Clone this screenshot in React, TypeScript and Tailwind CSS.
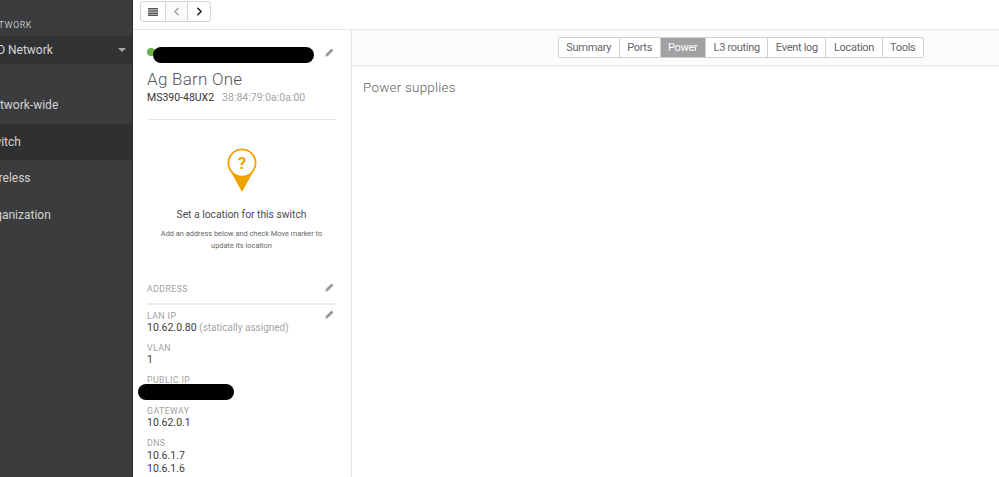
import { ChevronLeft, ChevronRight } from "lucide-react";

const tabs = ["Summary", "Ports", "Power", "L3 routing", "Event log", "Location", "Tools"];

function Pencil({ className = "" }: { className?: string }) {
  return (
    <svg viewBox="0 0 10 10" className={`h-[9px] w-[9px] text-[#9a9a9a] ${className}`} fill="currentColor">
      <path d="M7.2 0.6 L9.4 2.8 L3.2 9 L0.4 9.6 L1 6.8 Z" />
    </svg>
  );
}

function Field({ label, children }: { label: string; children: React.ReactNode }) {
  return (
    <div className="h-[31.8px] text-[10.5px] leading-[12px]">
      <div className="text-[8.8px] tracking-[0.4px] text-[#a2a2a2]">{label}</div>
      <div className="text-[#3b3b3b]">{children}</div>
    </div>
  );
}

function NavItem({ label, offset, active }: { label: string; offset: string; active?: boolean }) {
  return (
    <div className={`flex h-[36.5px] items-center overflow-hidden text-[12px] text-[#d2d2d2] ${active ? "bg-[#2f3031]" : ""}`}>
      <span className={offset}>{label}</span>
    </div>
  );
}

export default function App() {
  return (
    <div className="flex h-[477px] w-[999px] overflow-hidden bg-white font-['Roboto',sans-serif]">
      {/* Sidebar */}
      <aside className="w-[133px] shrink-0 overflow-hidden border-r border-[#2e2f30] bg-[#3b3c3e]">
        <div className="mt-[19px] ml-[-14px] h-[17px] text-[9px] leading-[12px] tracking-[0.5px] text-[#bdbdbd]">NETWORK</div>
        <div className="flex h-[28px] items-center justify-between bg-[#313233] pr-[6px] text-[12px] text-[#d6d6d6]">
          <span className="ml-[-10px]">SD Network</span>
          <span className="h-0 w-0 border-x-[4px] border-t-[4px] border-x-transparent border-t-[#a8a8a8]" />
        </div>
        <div className="mt-[23px]">
          <NavItem label="Network-wide" offset="ml-[-15px]" />
          <NavItem label="Switch" offset="ml-[-15px]" active />
          <NavItem label="Wireless" offset="ml-[-15px]" />
          <NavItem label="Organization" offset="ml-[-17px]" />
        </div>
      </aside>

      <div className="flex min-w-0 flex-1 flex-col">
        {/* Top toolbar */}
        <div className="flex h-[30px] shrink-0 items-start border-b border-[#e8e8e8] pl-[7px] pt-[1px]">
          <div className="flex h-[21px] rounded-[3px] border border-[#d4d4d4]">
            <div className="flex w-[25px] items-center justify-center border-r border-[#d4d4d4]">
              <svg viewBox="0 0 10 8" className="h-[8px] w-[10px] text-[#555]" fill="currentColor">
                <path d="M0 0h10v1.5H0zM0 2.2h10v1.5H0zM0 4.4h10v1.5H0zM0 6.5h10V8H0z" />
              </svg>
            </div>
            <div className="flex w-[22px] items-center justify-center border-r border-[#d4d4d4] bg-[#fafafa]">
              <ChevronLeft className="h-[13px] w-[13px] text-[#a5a5a5]" strokeWidth={3} />
            </div>
            <div className="flex w-[22px] items-center justify-center">
              <ChevronRight className="h-[13px] w-[13px] text-[#222]" strokeWidth={3} />
            </div>
          </div>
        </div>

        <div className="flex min-h-0 flex-1">
          {/* Device panel */}
          <section className="relative w-[219px] shrink-0 border-r border-[#e4e4e4] pl-[14px] pr-[15px]">
            <div className="flex h-[19px] items-center justify-between pt-[22px]">
              <span className="ml-0 h-[8px] w-[8px] rounded-full bg-[#67b346]" />
              <Pencil className="mr-[2px]" />
            </div>
            <span className="absolute left-[20px] top-[17px] h-[16px] w-[161px] rounded-full bg-black" />
            <h1 className="mt-[17px] text-[17px] leading-[20px] font-light tracking-[0.25px] text-[#55565a]">Ag Barn One</h1>
            <div className="mt-[2px] flex gap-[8px] text-[10.5px] leading-[13px]">
              <span className="text-[#333]">MS390-48UX2</span>
              <span className="text-[#a5a5a5]">38:84:79:0a:0a:00</span>
            </div>
            <div className="mt-[15px] border-t border-[#e8e8e8]" />

            <div className="flex flex-col items-center">
              <svg viewBox="0 0 30 44" className="mt-[28px] h-[44px] w-[30px]">
                <path d="M4 24 L15 44 L26 24 Z" fill="#f2a200" />
                <circle cx="15" cy="15" r="13.6" fill="#fff" stroke="#f2a200" strokeWidth="1.8" />
                <text x="15" y="21" textAnchor="middle" fontSize="17" fontWeight="700" fill="#f2a200" fontFamily="Roboto, sans-serif">?</text>
              </svg>
              <p className="mt-[16px] text-[10.3px] leading-[13px] text-[#4b4b4b]">Set a location for this switch</p>
              <p className="mt-[7px] w-[175px] text-center text-[7.4px] leading-[12px] text-[#666]">
                Add an address below and check Move marker to update its location
              </p>
            </div>

            <div className="mt-[28px] flex h-[25px] items-start justify-between border-b-2 border-[#ececec] pt-[3px]">
              <span className="text-[8.8px] leading-[12px] tracking-[0.4px] text-[#a2a2a2]">ADDRESS</span>
              <Pencil className="mr-[2px]" />
            </div>
            <div className="relative mt-[5px]">
              <Pencil className="absolute right-[2px] top-0" />
              <Field label="LAN IP">
                10.62.0.80 <span className="text-[10px] text-[#a5a5a5]">(statically assigned)</span>
              </Field>
              <Field label="VLAN">1</Field>
              <Field label="PUBLIC IP">
                <span className="invisible">0.0.0.0</span>
              </Field>
              <span className="absolute left-[-9px] top-[74px] h-[16px] w-[96px] rounded-full bg-black" />
              <Field label="GATEWAY">10.62.0.1</Field>
              <div className="text-[10.5px] leading-[13px] text-[#3b3b3b]">
                <div className="text-[8.8px] leading-[12px] tracking-[0.4px] text-[#a2a2a2]">DNS</div>
                <div>10.6.1.7</div>
                <div>10.6.1.6</div>
              </div>
            </div>
          </section>

          {/* Main */}
          <main className="min-w-0 flex-1">
            <div className="flex h-[37px] items-center justify-end border-b-2 border-[#eeeeee] bg-[#fcfcfc] pr-[75px]">
              <div className="flex h-[21px] overflow-hidden rounded-[2px] border border-[#d2d2d2] bg-white text-[11px] leading-[19px] tracking-[-0.3px] text-[#666]">
                {tabs.map((t) => (
                  <div
                    key={t}
                    className={`border-r border-[#d2d2d2] px-[7.5px] last:border-r-0 ${t === "Power" ? "bg-[#a0a1a3] text-white" : ""}`}
                  >
                    {t}
                  </div>
                ))}
              </div>
            </div>
            <h2 className="mt-[11px] ml-[11px] text-[13.5px] leading-[18px] font-light tracking-[0.2px] text-[#5f5f5f]">Power supplies</h2>
          </main>
        </div>
      </div>
    </div>
  );
}
